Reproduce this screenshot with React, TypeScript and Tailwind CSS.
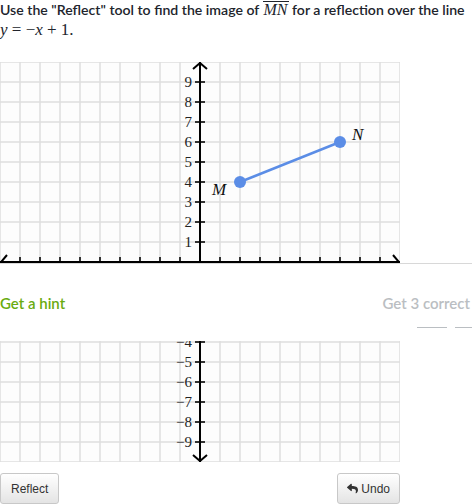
import { FaReply } from "react-icons/fa";

const serif = { fontFamily: '"Liberation Serif", "DejaVu Serif", serif' };

const Graph = () => {
  const lines = Array.from({ length: 21 }, (_, i) => i * 20);
  const yLabels = [9, 8, 7, 6, 5, 4, 3, 2, 1, -1, -2, -3, -4, -5, -6, -7, -8, -9];

  return (
    <svg width={400} height={400} viewBox="0 0 400 400" className="block bg-[#fdfdfd]">
      {lines.map((v) => (
        <g key={v}>
          <line x1={v} y1={0} x2={v} y2={400} stroke="#dedede" strokeWidth={1.5} />
          <line x1={0} y1={v} x2={400} y2={v} stroke="#dedede" strokeWidth={1.5} />
        </g>
      ))}
      {lines.slice(1, 20).map((v) => (
        <line key={`tx${v}`} x1={v} y1={195} x2={v} y2={205} stroke="#333" strokeWidth={2} />
      ))}
      {lines.slice(1, 20).map((v) => (
        <line key={`ty${v}`} x1={195} y1={v} x2={205} y2={v} stroke="#333" strokeWidth={2} />
      ))}
      <line x1={0} y1={200} x2={400} y2={200} stroke="#000" strokeWidth={2} />
      <line x1={200} y1={0} x2={200} y2={400} stroke="#000" strokeWidth={2} />
      <polyline points="193,7 200,1 207,7" fill="none" stroke="#000" strokeWidth={2} />
      <polyline points="193,393 200,399 207,393" fill="none" stroke="#000" strokeWidth={2} />
      <polyline points="7,193 1,200 7,207" fill="none" stroke="#000" strokeWidth={2} />
      <polyline points="393,193 399,200 393,207" fill="none" stroke="#000" strokeWidth={2} />
      {yLabels.map((n) => (
        <text
          key={n}
          x={192}
          y={200 - n * 20 + 5}
          textAnchor="end"
          fontSize={15}
          fill="#222"
          style={serif}
        >
          {n < 0 ? `\u2212${-n}` : n}
        </text>
      ))}
      <line x1={240} y1={120} x2={340} y2={80} stroke="#5b8de6" strokeWidth={2.5} />
      <circle cx={240} cy={120} r={6} fill="#5b8de6" />
      <circle cx={340} cy={80} r={6} fill="#5b8de6" />
      <text x={212} y={133} fontSize={17} fontStyle="italic" fill="#111" style={serif}>
        M
      </text>
      <text x={352} y={78} fontSize={17} fontStyle="italic" fill="#111" style={serif}>
        N
      </text>
    </svg>
  );
};

export default function App() {
  return (
    <div className="relative h-[504px] w-[472px] overflow-hidden bg-white text-[#333]" style={{ fontFamily: 'Lato, "Open Sans", sans-serif' }}>
      <p className="h-[40px] whitespace-nowrap text-[14.1px] font-semibold leading-[20px] text-[#21242c]">
        Use the "Reflect" tool to find the image of{" "}
        <span className="inline-block border-t border-[#21242c] px-[1px] text-[16px] font-normal italic leading-[15px]" style={serif}>
          MN
        </span>{" "}
        for a reflection over the line
        <br />
        <span className="text-[17px] font-normal leading-none" style={serif}>
          <i>y</i> = −<i>x</i> + 1.
        </span>
      </p>

      <div className="mt-[22px]">
        <Graph />
      </div>

      <div className="mt-[11px] flex w-[400px] justify-between">
        <button className="h-[31px] rounded-[3px] border border-[#c8c8c8] bg-gradient-to-b from-white to-[#e4e4e4] px-[10px] text-[12px] text-[#333]" style={{ fontFamily: '"Liberation Sans", Arial, sans-serif' }}>
          Reflect
        </button>
        <button className="flex h-[31px] items-center gap-[3px] rounded-[3px] border border-[#c8c8c8] bg-gradient-to-b from-white to-[#e4e4e4] px-[9px] text-[12px] text-[#333]" style={{ fontFamily: '"Liberation Sans", Arial, sans-serif' }}>
          <FaReply size={11} />
          Undo
        </button>
      </div>

      <div className="absolute left-0 right-0 top-[263px] h-[78px] border-t border-[#d8d8d8] bg-white">
        <div className="mt-[28px] flex items-center justify-between whitespace-nowrap">
          <span className="text-[15px] font-semibold text-[#69ab10]">Get a hint</span>
          <span className="pr-[2px] text-[15px] font-semibold text-[#babec2]">Get 3 correct</span>
        </div>
        <div className="mt-[12px] flex justify-end gap-[8px]">
          <div className="h-[1.5px] w-[30px] bg-[#babec2]" />
          <div className="-mr-[10px] h-[1.5px] w-[27px] bg-[#babec2]" />
        </div>
      </div>
    </div>
  );
}
